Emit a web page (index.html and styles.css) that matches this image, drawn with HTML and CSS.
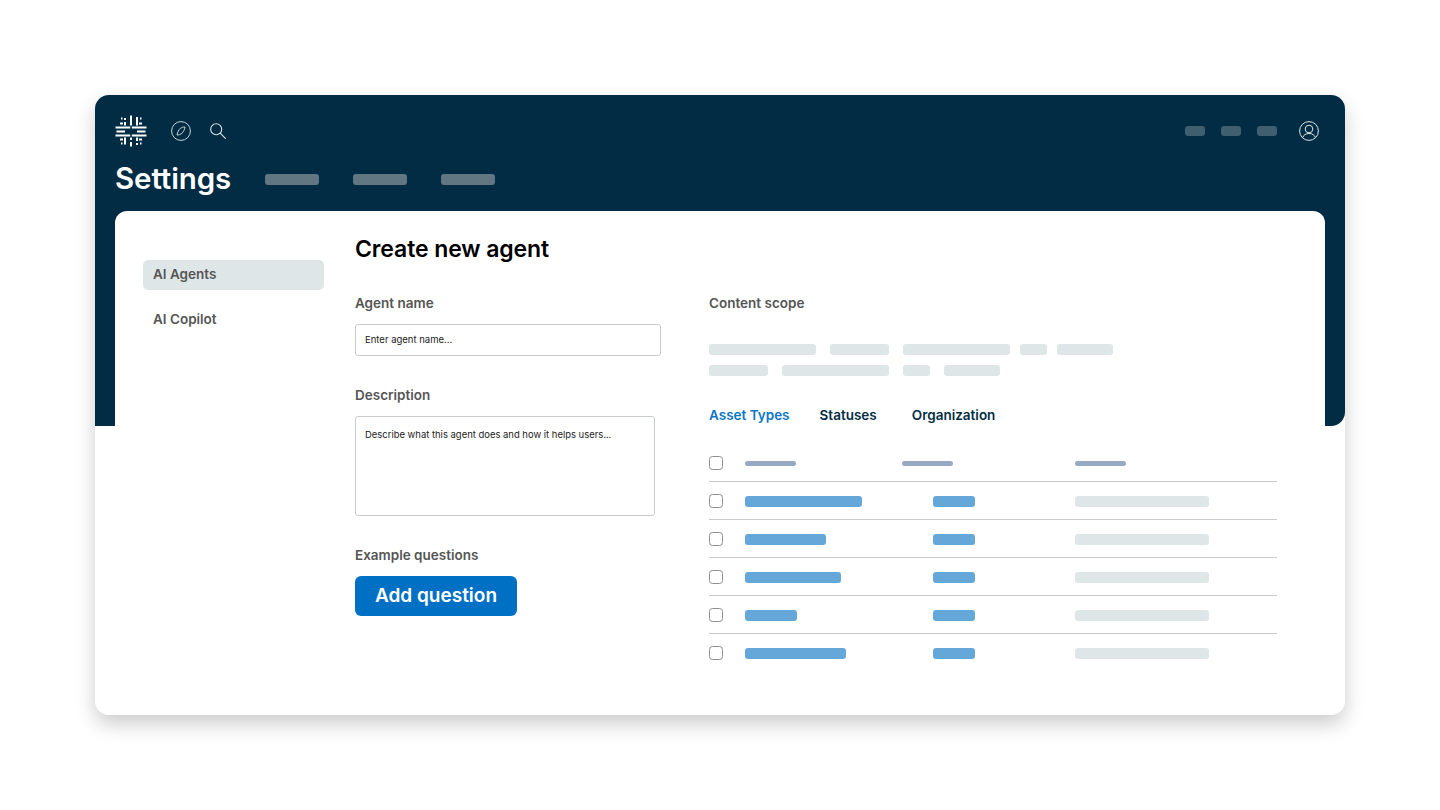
FILE: index.html
```html
<!DOCTYPE html>
<html lang="en">
<head>
<meta charset="utf-8">
<title>Create new agent</title>
<link rel="stylesheet" href="styles.css">
</head>
<body>
<main class="card">
  <header class="top">
    <div class="icons">
      <svg class="logo" width="32" height="32" viewBox="0 0 32 32" fill="none" stroke="#fff" stroke-width="2">
        <path d="M.5 12.400h14.700M16.800 12.400h14.700M.5 20.600h14.700M16.800 20.600h14.700"/>
        <path d="M1.500 16.500h8.500M22 16.500h8.500"/>
        <path d="M10 3v2M10 7v3.500M16 .5v10M22 2v8.500M10 22.500v7M16 22.500v2.500M16 27v4.500M22 22.500v3.500M22 28v2"/>
        <path d="M5 8.400h3M24 8.400h3M5 24.600h3M24 24.600h3M6 3.500h1.500M6 28.500h1.500M25 3.500h1.500M25 28.500h1.500"/>
      </svg>
      <svg class="compass" width="20" height="20" viewBox="0 0 20 20" fill="none" stroke="#dfe5e8" stroke-width=".9">
        <circle cx="10" cy="10" r="9.400"/>
        <path d="M14 6c-3.400-.2-6.800 1.800-8 8 3.800.2 7-2.600 8-8z"/>
      </svg>
      <svg class="search" width="16" height="16" viewBox="0 0 16 16" fill="none" stroke="#dfe5e8" stroke-width="1.100">
        <circle cx="6.200" cy="6.200" r="5.500"/>
        <path d="M10.200 10.200l5.500 5.500"/>
      </svg>
      <div class="utils">
        <span class="util"></span>
        <span class="util"></span>
        <span class="util"></span>
        <svg class="user" width="20" height="20" viewBox="0 0 20 20" fill="none" stroke="#dfe5e8" stroke-width="1">
          <circle cx="10" cy="10" r="9.400"/>
          <circle cx="10" cy="8" r="3.800"/>
          <path d="M3.600 16.600c1-2.800 3.300-4.100 6.400-4.100s5.400 1.300 6.400 4.100"/>
        </svg>
      </div>
    </div>
    <div class="titlebar">
      <h1 class="title">Settings</h1>
      <nav class="tabs">
        <span class="tab"></span>
        <span class="tab"></span>
        <span class="tab"></span>
      </nav>
    </div>
  </header>
  <div class="panel">
    <aside class="side">
      <div class="side-item active">AI Agents</div>
      <div class="side-item">AI Copilot</div>
    </aside>
    <section class="form">
      <h2 class="heading">Create new agent</h2>
      <div class="cols">
        <div class="left">
          <div class="label">Agent name</div>
          <div class="input">Enter agent name...</div>
          <div class="label label-desc">Description</div>
          <div class="textarea">Describe what this agent does and how it helps users...</div>
          <div class="label label-q">Example questions</div>
          <button class="btn" type="button">Add question</button>
        </div>
        <div class="right">
          <div class="label">Content scope</div>
          <div class="chips">
            <div class="chip-row">
              <span class="chip w107"></span>
              <span class="chip w59 gap-l"></span>
              <span class="chip w107 gap-l"></span>
              <span class="chip w27"></span>
              <span class="chip w56"></span>
            </div>
            <div class="chip-row">
              <span class="chip w59"></span>
              <span class="chip w107 gap-l"></span>
              <span class="chip w27 gap-l"></span>
              <span class="chip w56 gap-l"></span>
            </div>
          </div>
          <div class="filters">
            <span class="filter on">Asset Types</span>
            <span class="filter">Statuses</span>
            <span class="filter">Organization</span>
          </div>
          <div class="table">
            <div class="row head">
              <span class="check"></span>
              <span class="cell c1"><i class="hbar"></i></span>
              <span class="cell c2h"><i class="hbar"></i></span>
              <span class="cell c3"><i class="hbar"></i></span>
            </div>
            <div class="row">
              <span class="check"></span>
              <span class="cell c1"><i class="bar" style="width:117px"></i></span>
              <span class="cell c2"><i class="bar tag"></i></span>
              <span class="cell c3"><i class="bar grey"></i></span>
            </div>
            <div class="row">
              <span class="check"></span>
              <span class="cell c1"><i class="bar" style="width:81px"></i></span>
              <span class="cell c2"><i class="bar tag"></i></span>
              <span class="cell c3"><i class="bar grey"></i></span>
            </div>
            <div class="row">
              <span class="check"></span>
              <span class="cell c1"><i class="bar" style="width:96px"></i></span>
              <span class="cell c2"><i class="bar tag"></i></span>
              <span class="cell c3"><i class="bar grey"></i></span>
            </div>
            <div class="row">
              <span class="check"></span>
              <span class="cell c1"><i class="bar" style="width:52px"></i></span>
              <span class="cell c2"><i class="bar tag"></i></span>
              <span class="cell c3"><i class="bar grey"></i></span>
            </div>
            <div class="row last">
              <span class="check"></span>
              <span class="cell c1"><i class="bar" style="width:101px"></i></span>
              <span class="cell c2"><i class="bar tag"></i></span>
              <span class="cell c3"><i class="bar grey"></i></span>
            </div>
          </div>
        </div>
      </div>
    </section>
  </div>
</main>
</body>
</html>
```
FILE: styles.css
```css
* { box-sizing: border-box; }
html, body { margin: 0; height: 810px; background: #fff; overflow: hidden; }
body { padding: 95px 95px 0; font-family: Inter, "Liberation Sans", sans-serif; }

.card {
  position: relative;
  height: 620px;
  background: #fff;
  border-radius: 14px;
  box-shadow: 0 9px 20px rgba(0, 0, 0, .2);
  overflow: hidden;
}
.card::before {
  content: "";
  position: absolute;
  left: 0; right: 0; top: 0;
  height: 331px;
  background: #012c43;
  border-bottom-right-radius: 14px;
}

.top { position: relative; height: 116px; padding: 20px 20px 0; }
.icons { display: flex; align-items: center; height: 32px; }
.logo { flex: none; }
.compass { margin-left: 24px; }
.search { margin-left: 19px; margin-top: -1px; }
.utils { margin-left: auto; margin-right: 6px; display: flex; align-items: center; gap: 16px; }
.util { width: 20px; height: 10px; border-radius: 3px; background: #3f5e6e; }
.user { margin-left: 6px; }

.titlebar { display: flex; align-items: center; margin-top: 12px; height: 38px; }
.title { margin: 0; width: 150px; font-size: 29.500px; line-height: 38px; font-weight: 600; color: #fff; letter-spacing: -.1px; }
.tabs { display: flex; gap: 34px; }
.tab { width: 54px; height: 11px; border-radius: 3px; background: #617882; margin-top: 2px; }

.panel {
  position: relative;
  display: flex;
  height: 504px;
  margin: 0 20px;
  background: #fff;
  border-radius: 12px 12px 0 0;
}

.side { width: 240px; padding: 49px 0 0 28px; }
.side-item {
  width: 181px;
  height: 30px;
  margin-bottom: 15px;
  padding-left: 10px;
  border-radius: 5px;
  font-size: 13.500px;
  line-height: 28px;
  font-weight: 600;
  color: #555;
}
.side-item.active { background: #dfe6e7; }

.form { flex: 1; padding-top: 22px; }
.heading { margin: 0; font-size: 23px; line-height: 32px; font-weight: 600; color: #000; letter-spacing: -.1px; }

.cols { display: flex; margin-top: 26px; }
.left { width: 354px; }
.right { width: 568px; }

.label { font-size: 13.500px; line-height: 24px; font-weight: 600; color: #555; }
.label-desc { margin-top: 27px; }
.label-q { margin-top: 27px; }

.input {
  width: 306px;
  height: 32px;
  margin-top: 9px;
  padding-left: 9px;
  border: 1px solid #c8cbcc;
  border-radius: 3px;
  font-size: 9.500px;
  line-height: 29px;
  color: #222;
}
.textarea {
  width: 300px;
  height: 100px;
  margin-top: 9px;
  padding: 9px;
  border: 1px solid #c8cbcc;
  border-radius: 3px;
  font-size: 9.450px;
  line-height: 18px;
  color: #222;
}
.btn {
  display: block;
  width: 162px;
  height: 40px;
  margin-top: 9px;
  padding: 0 0 2px;
  border: 0;
  border-radius: 6px;
  background: #0070c5;
  color: #fff;
  font-family: inherit;
  font-size: 19px;
  font-weight: 600;
}

.chips { margin-top: 29px; display: flex; flex-direction: column; gap: 10px; }
.chip-row { display: flex; gap: 10px; }
.chip { height: 11px; border-radius: 3px; background: #dfe6e7; }
.gap-l { margin-left: 4px; }
.w107 { width: 107px; }
.w59 { width: 59px; }
.w27 { width: 27px; }
.w56 { width: 56px; }

.filters { display: flex; margin-top: 27px; height: 24px; }
.filter { font-size: 13.500px; line-height: 24px; font-weight: 600; color: #032d44; margin-right: 30px; }
.filter:nth-child(2) { margin-right: 35px; }
.filter.on { color: #0b76c7; }

.table { margin-top: 17px; width: 568px; }
.row {
  display: flex;
  align-items: center;
  height: 38px;
  border-bottom: 1px solid #c9cccd;
}
.row.last { border-bottom: 0; }
.check {
  flex: none;
  width: 14px;
  height: 14px;
  border: 1px solid #8d8f91;
  border-radius: 3.500px;
}
.cell { display: block; margin-top: 1px; }
.row.last .cell { margin-top: 0; }
.cell i { display: block; }
.c1 { width: 188px; margin-left: 22px; }
.c2 { width: 142px; }
.c2h { width: 173px; margin-left: -31px; }
.c3 { width: 134px; }
.hbar { width: 51px; height: 5px; border-radius: 2.500px; background: #98a9c4; }
.bar { height: 11px; border-radius: 3px; background: #66a7da; }
.bar.tag { width: 42px; }
.bar.grey { width: 134px; background: #dfe6e7; }
```
